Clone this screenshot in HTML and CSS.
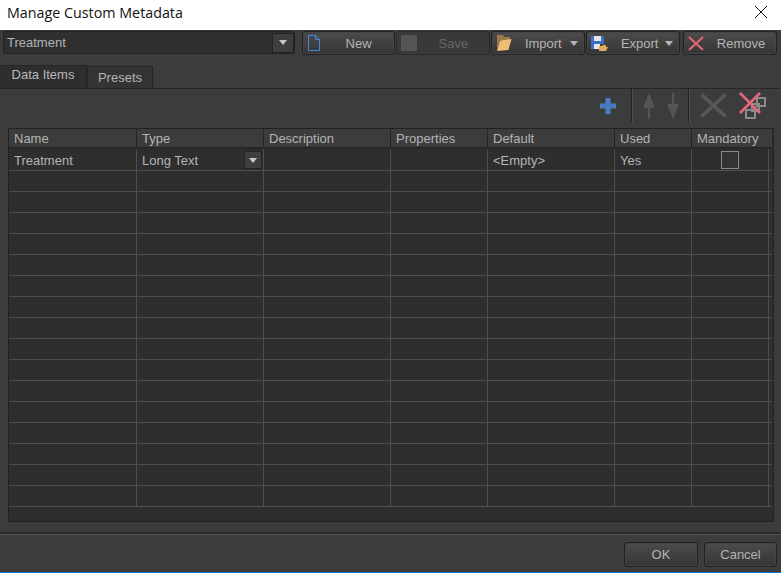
FILE: index.html
```html
<!DOCTYPE html>
<html lang="en">
<head>
  <meta charset="UTF-8"/>
  <meta name="viewport" content="width=device-width, initial-scale=1.0"/>
  <title>Manage Custom Metadata</title>
  <link rel="stylesheet" href="styles.css">
</head>
<body>
  <div class="dialog">
    <div class="titlebar">
      <span class="title">Manage Custom Metadata</span>
      <svg class="close" width="14" height="14" viewBox="0 0 14 14"><path d="M1 1 13 13M13 1 1 13" stroke="#111" stroke-width="1" fill="none"/></svg>
    </div>

    <div class="toolbar">
      <div class="combo">
        <span class="combo-text">Treatment</span>
        <span class="drop"><i class="arrow"></i></span>
      </div>
      <button class="btn btn-new">
        <svg class="btn-icon" width="14" height="18" viewBox="0 0 14 18"><path d="M1.5 1.5H8.5L12.5 5.5V16.5H1.5Z M8.5 1.5V5.5H12.5" fill="none" stroke="#4a86d8" stroke-width="1"/></svg>
        <span class="btn-label">New</span>
      </button>
      <button class="btn btn-save" disabled>
        <svg class="btn-icon" width="16" height="16" viewBox="0 0 16 16"><rect width="16" height="16" rx="1" fill="#555"/></svg>
        <span class="btn-label">Save</span>
      </button>
      <button class="btn btn-import">
        <svg class="btn-icon" width="16" height="18" viewBox="0 0 16 18"><path d="M1 1H7L8 3H14V6H4L1 16Z" fill="#9a7a48"/><path d="M4 6.500 15.500 5 12.500 16 1 17Z" fill="#eebc72"/></svg>
        <span class="btn-label">Import</span>
        <i class="arrow"></i>
      </button>
      <button class="btn btn-export">
        <svg class="btn-icon" width="17" height="17" viewBox="0 0 17 17"><path d="M0 1H12L13 2V9H8V14H0Z" fill="#3f6fc4"/><rect x="3" y="1" width="7" height="5" fill="#e6e6e6"/><rect x="3" y="9" width="6" height="5" fill="#e6e6e6"/><path d="M8 11H11L12 10H15V12H17L15 16H8Z" fill="#e0a95c"/></svg>
        <span class="btn-label">Export</span>
        <i class="arrow"></i>
      </button>
      <button class="btn btn-remove">
        <svg class="btn-icon" width="16" height="15" viewBox="0 0 16 15"><path d="M1 1 15 14M15 1 1 14" stroke="#e5687a" stroke-width="2" fill="none"/></svg>
        <span class="btn-label">Remove</span>
      </button>
    </div>

    <div class="tabs">
      <div class="tab active">Data Items</div>
      <div class="tab">Presets</div>
    </div>

    <div class="panel">
      <div class="iconbar">
        <svg class="ic-add" width="16" height="16" viewBox="0 0 16 16"><path d="M5.500 0H10.500V5.500H16V10.500H10.500V16H5.500V10.500H0V5.500H5.500Z" fill="#4a7cc4"/></svg>
        <span class="sep"></span>
        <svg class="ic-up" width="12" height="26" viewBox="0 0 12 26"><path d="M6 0 12 15H7V26H5V15H0Z" fill="#555"/></svg>
        <svg class="ic-down" width="12" height="26" viewBox="0 0 12 26"><path d="M5 0H7V11H12L6 26 0 11H5Z" fill="#555"/></svg>
        <span class="sep"></span>
        <svg class="ic-del" width="27" height="25" viewBox="0 0 27 25"><path d="M1.500 1.500 25.500 23.500M25.500 1.500 1.500 23.500" stroke="#585858" stroke-width="3.500" fill="none"/></svg>
        <svg class="ic-delall" width="28" height="27" viewBox="0 0 28 27"><g fill="none" stroke="#8a8a8a" stroke-width="2"><rect x="18" y="6" width="8" height="8"/><rect x="13" y="12" width="7" height="7"/><rect x="7" y="18" width="9" height="8"/></g><path d="M1 1 21 21M21 1 1 21" stroke="#e5687a" stroke-width="2.500" fill="none"/></svg>
      </div>

      <div class="grid-wrap">
        <table class="grid">
          <colgroup>
            <col class="c-name"><col class="c-type"><col class="c-desc"><col class="c-prop"><col class="c-def"><col class="c-used"><col class="c-mand"><col class="c-end">
          </colgroup>
          <thead>
            <tr>
              <th>Name</th><th>Type</th><th>Description</th><th>Properties</th><th>Default</th><th>Used</th><th colspan="2" class="th-last">Mandatory</th>
            </tr>
          </thead>
          <tbody>
            <tr>
              <td>Treatment</td>
              <td class="has-drop">Long Text<span class="cell-drop"><i class="arrow"></i></span></td>
              <td></td><td></td><td>&lt;Empty&gt;</td><td>Yes</td>
              <td class="center"><span class="check"></span></td><td></td>
            </tr>
            <tr><td></td><td></td><td></td><td></td><td></td><td></td><td></td><td></td></tr>
            <tr><td></td><td></td><td></td><td></td><td></td><td></td><td></td><td></td></tr>
            <tr><td></td><td></td><td></td><td></td><td></td><td></td><td></td><td></td></tr>
            <tr><td></td><td></td><td></td><td></td><td></td><td></td><td></td><td></td></tr>
            <tr><td></td><td></td><td></td><td></td><td></td><td></td><td></td><td></td></tr>
            <tr><td></td><td></td><td></td><td></td><td></td><td></td><td></td><td></td></tr>
            <tr><td></td><td></td><td></td><td></td><td></td><td></td><td></td><td></td></tr>
            <tr><td></td><td></td><td></td><td></td><td></td><td></td><td></td><td></td></tr>
            <tr><td></td><td></td><td></td><td></td><td></td><td></td><td></td><td></td></tr>
            <tr><td></td><td></td><td></td><td></td><td></td><td></td><td></td><td></td></tr>
            <tr><td></td><td></td><td></td><td></td><td></td><td></td><td></td><td></td></tr>
            <tr><td></td><td></td><td></td><td></td><td></td><td></td><td></td><td></td></tr>
            <tr><td></td><td></td><td></td><td></td><td></td><td></td><td></td><td></td></tr>
            <tr><td></td><td></td><td></td><td></td><td></td><td></td><td></td><td></td></tr>
            <tr><td></td><td></td><td></td><td></td><td></td><td></td><td></td><td></td></tr>
            <tr class="cut"><td></td><td></td><td></td><td></td><td></td><td></td><td></td><td></td></tr>
          </tbody>
        </table>
      </div>
    </div>

    <div class="footer">
      <button class="btn btn-ok">OK</button>
      <button class="btn btn-cancel">Cancel</button>
    </div>
  </div>
</body>
</html>
```

FILE: styles.css
```css
html, body { margin: 0; padding: 0; height: 100%; overflow: hidden; }
body { background: #3c3c3c; font-family: "Liberation Sans", sans-serif; font-size: 13px; color: #b4b4b4; }

.dialog { display: flex; flex-direction: column; width: 781px; height: 573px; box-sizing: border-box; border-bottom: 1px solid #0a78d2; }

.titlebar { display: flex; align-items: center; justify-content: space-between; height: 30px; padding: 0 13px 6px 7px; box-sizing: border-box; background: #fff; flex: none; }
.title { font-family: "Open Sans", sans-serif; font-size: 14.3px; color: #111; }

.toolbar { display: flex; height: 25px; padding: 1px 4px 0 3px; flex: none; }
.combo { display: flex; align-items: center; justify-content: space-between; width: 292px; height: 23px; box-sizing: border-box; border: 1px solid #232323; border-radius: 2px; background: #2f2f2f; padding: 0 0 0 3px; margin-right: 7px; }
.drop { display: flex; align-items: center; justify-content: center; width: 20px; height: 18px; background: #3e3e3e; border: 1px solid #232323; }
.arrow { display: inline-block; width: 0; height: 0; border-left: 4px solid transparent; border-right: 4px solid transparent; border-top: 5px solid #c8c8c8; }

.btn { display: flex; align-items: center; height: 24px; box-sizing: border-box; padding: 0; border: 1px solid #222; border-radius: 3px; background: linear-gradient(#4c4c4c, #353535); box-shadow: inset 0 0 0 1px #444; color: #b4b4b4; font-family: "Liberation Sans", sans-serif; font-size: 13px; position: relative; }
.btn-new, .btn-save, .btn-import, .btn-export, .btn-remove { width: 94px; margin-right: 1px; }
.btn-icon { margin-left: 4px; flex: none; }
.btn-label { flex: 1; text-align: center; }
.btn-new .btn-label { padding-left: 2px; }
.btn-save { background: #393939; color: #666; box-shadow: none; border-color: #2c2c2c; }
.btn-import .btn-label { padding-left: 4px; }
.btn-export .btn-label { padding-left: 6px; }
.btn-import .arrow, .btn-export .arrow { margin-right: 6px; border-top-color: #b4b4b4; }
.btn-export { margin-right: 3px; }
.btn-remove { margin-right: 0; }
.btn-remove .btn-label { padding-left: 2px; }

.tabs { display: flex; align-items: flex-end; height: 32px; flex: none; box-sizing: border-box; }
.tab { height: 22px; line-height: 22px; box-sizing: border-box; background: #343434; border: 1px solid #262626; border-bottom: 0; width: 66px; text-align: center; }
.tab.active { width: 87px; height: 23px; line-height: 18px; background: #2e2e2e; border-left: 0; color: #b8b8b8; }

.panel { flex: 1; min-height: 0; padding: 0 7px 10px 8px; border-top: 1px solid #262626; border-bottom: 2px solid #2a2a2a; box-shadow: 0 1px 0 #555; display: flex; flex-direction: column; }

.iconbar { display: flex; align-items: center; justify-content: flex-end; height: 39px; flex: none; padding: 0 7px 6px 0; box-sizing: border-box; }
.sep { width: 1px; height: 33px; background: #222; border-right: 1px solid #505050; }
.ic-add { margin-right: 15px; }
.ic-up { margin-left: 10px; margin-right: 12px; }
.ic-down { margin-right: 9px; }
.ic-del { margin-left: 10px; margin-right: 12px; }

.grid-wrap { flex: 1; min-height: 0; overflow: hidden; border: 1px solid #222; background: #2e2e2e; }
.grid { table-layout: fixed; border-collapse: separate; border-spacing: 0; width: 763px; }
.c-name { width: 128px; }
.c-type, .c-desc, .c-def { width: 127px; }
.c-prop { width: 97px; }
.c-used, .c-mand { width: 77px; }
.c-end { width: 3px; }
.grid th { height: 19px; padding: 0 0 0 5px; box-sizing: border-box; background: #3c3c3c; font-weight: normal; text-align: left; border-right: 1px solid #242424; border-bottom: 1px solid #242424; overflow: hidden; white-space: nowrap; }
.grid th.th-last { border-right: 0; }
.grid td { height: 21px; padding: 0 0 0 5px; box-sizing: border-box; border-right: 1px solid #4e4e4e; border-bottom: 1px solid #4e4e4e; white-space: nowrap; overflow: hidden; }
.grid td:last-child { border-right: 0; padding: 0; }
.grid tbody tr:first-child td { height: 23px; border-top: 2px solid #2a2a2a; }
.has-drop { position: relative; }
.cell-drop { position: absolute; right: 1px; top: 1px; width: 18px; height: 18px; display: flex; align-items: center; justify-content: center; background: #3e3e3e; border: 1px solid #232323; box-sizing: border-box; }
.grid td.center { text-align: center; padding: 0; }
.check { display: inline-block; width: 16px; height: 16px; border: 1px solid #8a8a8a; background: #333; vertical-align: middle; }

.footer { display: flex; justify-content: flex-end; gap: 6px; padding: 8px 4px 5px 0; flex: none; }
.btn-ok, .btn-cancel { justify-content: center; width: 74px; height: 25px; }
.btn-cancel { width: 73px; }
```
